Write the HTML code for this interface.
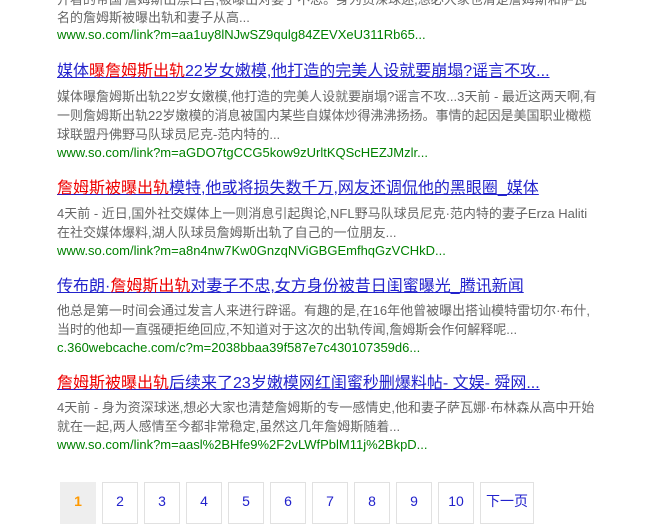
<!DOCTYPE html>
<html><head><meta charset="utf-8"><style>
body{margin:0;width:665px;height:517px;overflow:hidden;background:#fff;position:relative;font-family:"Liberation Sans","Noto Sans CJK SC",sans-serif}
.l{position:absolute;left:57px;white-space:nowrap}
.s{font-size:13px;color:#666;line-height:19px}
.u{font-size:13px;color:#008000;line-height:18px}
.t{font-size:16px;color:#1a0dab;text-decoration:underline;line-height:20px;color:#2222cc}
.t em{font-style:normal;color:#e00}
.p{position:absolute;top:482px;width:34px;height:40px;border:1px solid #e1e1e1;font-size:14px;color:#1a0dab;text-align:center;line-height:36px;color:#2222cc}
</style></head><body>
<div class="l s" style="top:-10px">开看的帝国'詹姆斯出漂白宫,被曝出对妻子不忠。身为资深球迷,想必大家也清楚詹姆斯和萨瓦</div>
<div class="l s" style="top:8px">名的詹姆斯被曝出轨和妻子从高...</div>
<div class="l u" style="top:26px">www.so.com/link?m=aa1uy8lNJwSZ9qulg84ZEVXeU311Rb65...</div>

<div class="l t" style="top:62px">媒体<em>曝詹姆斯出轨</em>22岁女嫩模,他打造的完美人设就要崩塌?谣言不攻...</div>
<div class="l s" style="top:87px">媒体曝詹姆斯出轨22岁女嫩模,他打造的完美人设就要崩塌?谣言不攻...3天前 - 最近这两天啊,有</div>
<div class="l s" style="top:106px">一则詹姆斯出轨22岁嫩模的消息被国内某些自媒体炒得沸沸扬扬。事情的起因是美国职业橄榄</div>
<div class="l s" style="top:125px">球联盟丹佛野马队球员尼克-范内特的...</div>
<div class="l u" style="top:144px">www.so.com/link?m=aGDO7tgCCG5kow9zUrltKQScHEZJMzlr...</div>

<div class="l t" style="top:179px"><em>詹姆斯被曝出轨</em>模特,他或将损失数千万,网友还调侃他的黑眼圈_媒体</div>
<div class="l s" style="top:204px">4天前 - 近日,国外社交媒体上一则消息引起舆论,NFL野马队球员尼克·范内特的妻子Erza Haliti</div>
<div class="l s" style="top:223px">在社交媒体爆料,湖人队球员詹姆斯出轨了自己的一位朋友...</div>
<div class="l u" style="top:242px">www.so.com/link?m=a8n4nw7Kw0GnzqNViGBGEmfhqGzVCHkD...</div>

<div class="l t" style="top:277px">传布朗·<em>詹姆斯出轨</em>对妻子不忠,女方身份被昔日闺蜜曝光_腾讯新闻</div>
<div class="l s" style="top:301px">他总是第一时间会通过发言人来进行辟谣。有趣的是,在16年他曾被曝出搭讪模特雷切尔·布什,</div>
<div class="l s" style="top:320px">当时的他却一直强硬拒绝回应,不知道对于这次的出轨传闻,詹姆斯会作何解释呢...</div>
<div class="l u" style="top:339px">c.360webcache.com/c?m=2038bbaa39f587e7c430107359d6...</div>

<div class="l t" style="top:374px"><em>詹姆斯被曝出轨</em>后续来了23岁嫩模网红闺蜜秒删爆料帖- 文娱- 舜网...</div>
<div class="l s" style="top:398px">4天前 - 身为资深球迷,想必大家也清楚詹姆斯的专一感情史,他和妻子萨瓦娜·布林森从高中开始</div>
<div class="l s" style="top:417px">就在一起,两人感情至今都非常稳定,虽然这几年詹姆斯随着...</div>
<div class="l u" style="top:436px">www.so.com/link?m=aasl%2BHfe9%2F2vLWfPblM11j%2BkpD...</div>

<div class="p" style="left:60px;background:#eee;border-color:#eee;color:#f90;font-weight:bold">1</div>
<div class="p" style="left:102px">2</div>
<div class="p" style="left:144px">3</div>
<div class="p" style="left:186px">4</div>
<div class="p" style="left:228px">5</div>
<div class="p" style="left:270px">6</div>
<div class="p" style="left:312px">7</div>
<div class="p" style="left:354px">8</div>
<div class="p" style="left:396px">9</div>
<div class="p" style="left:438px">10</div>
<div class="p" style="left:480px;width:52px">下一页</div>
</body></html>
